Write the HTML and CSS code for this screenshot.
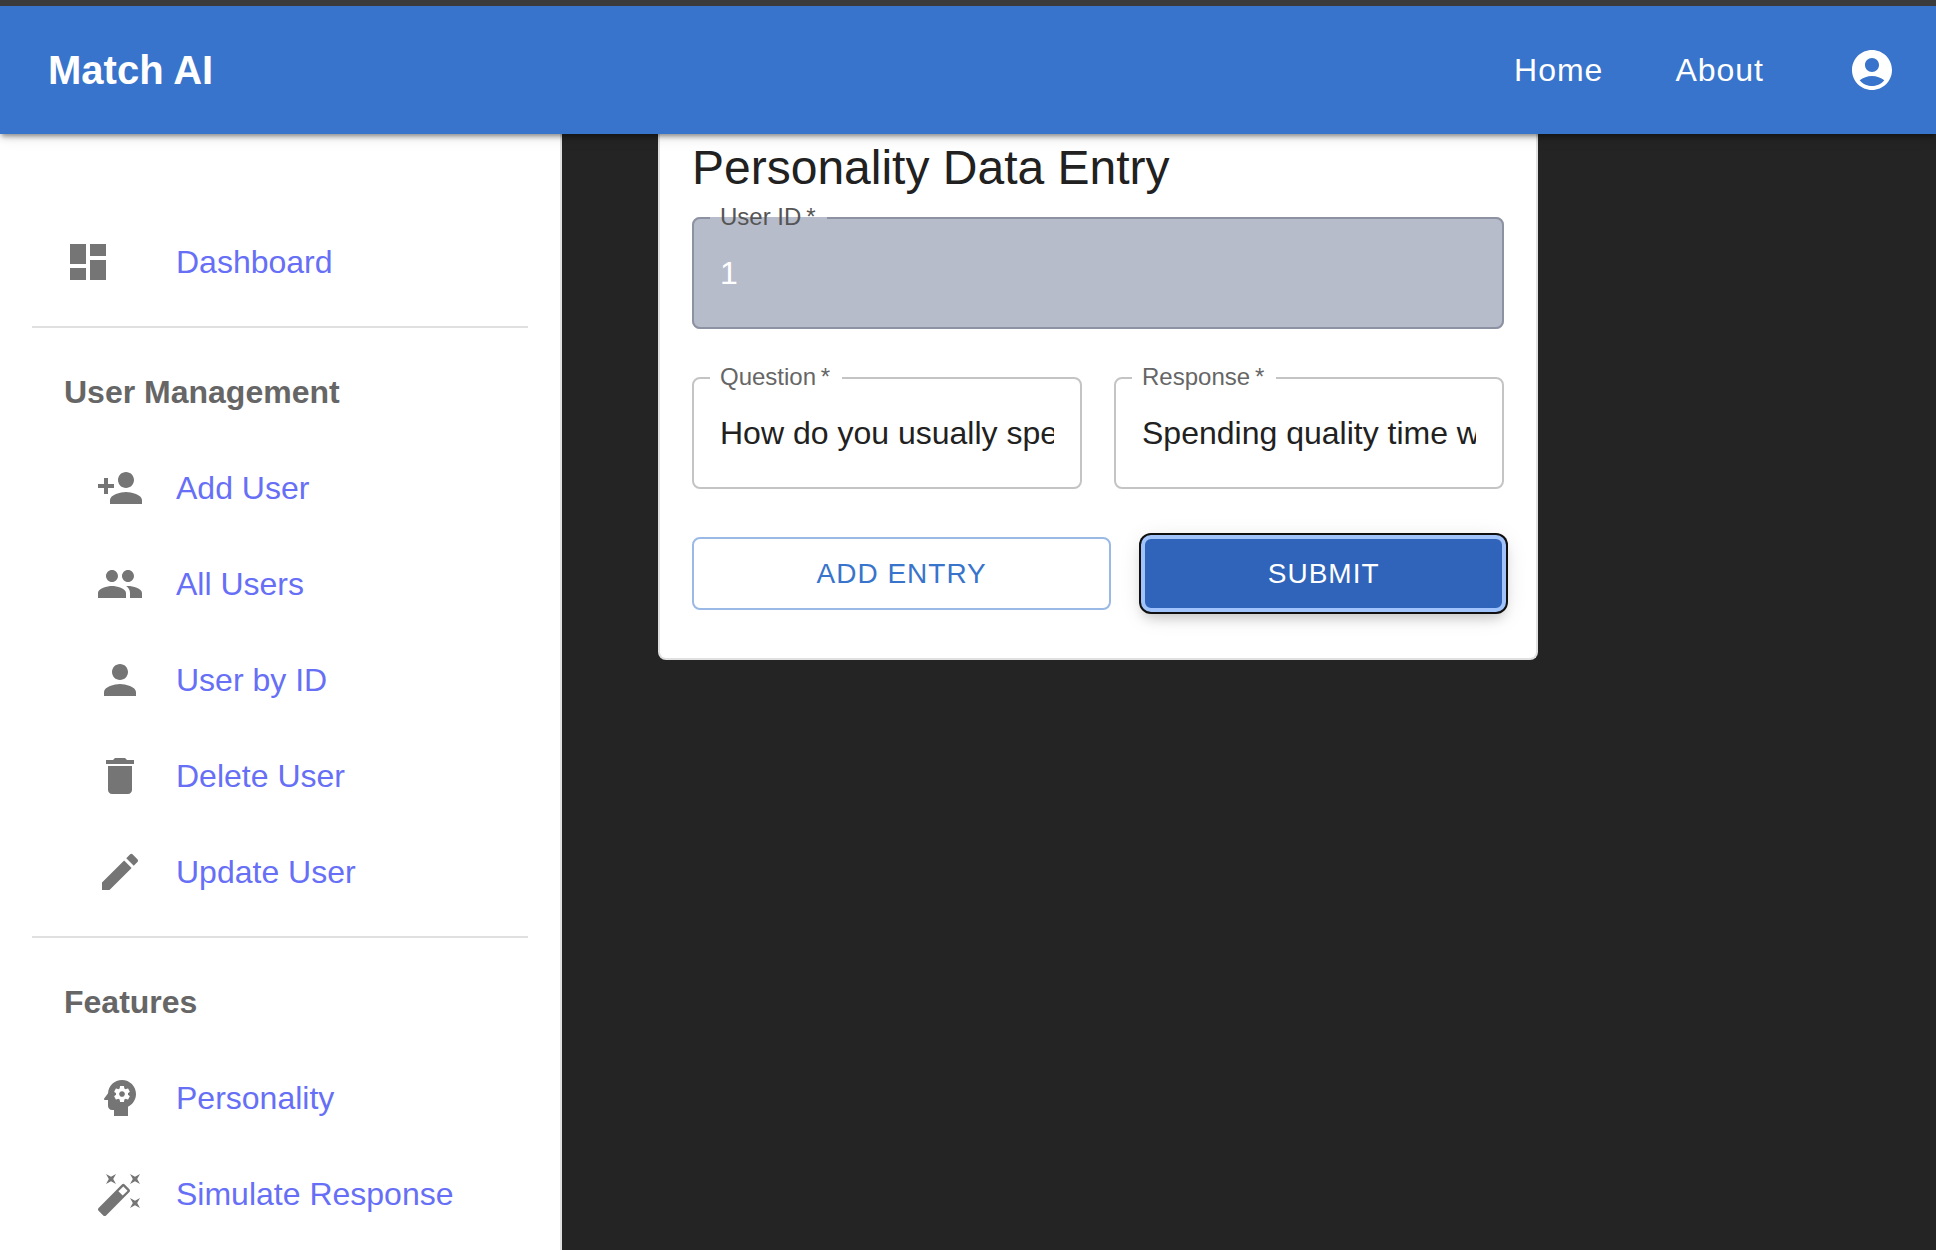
FILE: index.html
```html
<!DOCTYPE html>
<html lang="en">
<head>
<meta charset="utf-8">
<meta name="viewport" content="width=device-width, initial-scale=1">
<title>Match AI</title>
<link rel="stylesheet" href="styles.css">
</head>
<body>
<header class="appbar">
  <span class="brand">Match AI</span>
  <nav class="appnav" aria-label="Main">
    <a href="#home">Home</a>
    <a href="#about">About</a>
  </nav>
  <button class="account" type="button" aria-label="Account">
    <svg class="icon" viewBox="0 0 24 24" aria-hidden="true"><path d="M12 2C6.48 2 2 6.48 2 12s4.48 10 10 10 10-4.48 10-10S17.52 2 12 2m0 4c1.93 0 3.5 1.57 3.5 3.5S13.93 13 12 13s-3.5-1.57-3.5-3.5S10.07 6 12 6m0 14c-2.03 0-4.43-.82-6.14-2.88C7.55 15.8 9.68 15 12 15s4.45.8 6.14 2.12C16.43 19.18 14.03 20 12 20"/></svg>
  </button>
</header>
<div class="layout">
  <aside class="sidebar">
    <ul class="group group-top">
      <li><a class="item" href="#dashboard"><svg class="icon" viewBox="0 0 24 24" aria-hidden="true"><path d="M3 13h8V3H3zm0 8h8v-6H3zm10 0h8V11h-8zm0-18v6h8V3z"/></svg>Dashboard</a></li>
    </ul>
    <h2 class="subheader">User Management</h2>
    <ul class="group">
      <li><a class="item" href="#add"><svg class="icon" viewBox="0 0 24 24" aria-hidden="true"><path d="M15 12c2.210 0 4-1.790 4-4s-1.790-4-4-4-4 1.790-4 4 1.790 4 4 4m-9-2V7H4v3H1v2h3v3h2v-3h3v-2zm9 4c-2.670 0-8 1.340-8 4v2h16v-2c0-2.660-5.330-4-8-4"/></svg>Add User</a></li>
      <li><a class="item" href="#users"><svg class="icon" viewBox="0 0 24 24" aria-hidden="true"><path d="M16 11c1.660 0 2.990-1.340 2.990-3S17.660 5 16 5s-3 1.340-3 3 1.340 3 3 3m-8 0c1.660 0 2.990-1.340 2.990-3S9.660 5 8 5 5 6.340 5 8s1.340 3 3 3m0 2c-2.330 0-7 1.170-7 3.500V19h14v-2.500c0-2.330-4.670-3.500-7-3.500m8 0c-.290 0-.620.020-.970.050 1.160.840 1.970 1.970 1.970 3.450V19h6v-2.500c0-2.330-4.670-3.500-7-3.500"/></svg>All Users</a></li>
      <li><a class="item" href="#user"><svg class="icon" viewBox="0 0 24 24" aria-hidden="true"><path d="M12 12c2.210 0 4-1.790 4-4s-1.790-4-4-4-4 1.790-4 4 1.790 4 4 4m0 2c-2.670 0-8 1.340-8 4v2h16v-2c0-2.660-5.330-4-8-4"/></svg>User by ID</a></li>
      <li><a class="item" href="#delete"><svg class="icon" viewBox="0 0 24 24" aria-hidden="true"><path d="M6 19c0 1.100.900 2 2 2h8c1.100 0 2-.900 2-2V7H6zM19 4h-3.500l-1-1h-5l-1 1H5v2h14z"/></svg>Delete User</a></li>
      <li><a class="item" href="#update"><svg class="icon" viewBox="0 0 24 24" aria-hidden="true"><path d="M3 17.250V21h3.750L17.810 9.940l-3.750-3.750zM20.710 7.040c.390-.390.390-1.020 0-1.410l-2.340-2.340a.9959.9959 0 0 0-1.410 0l-1.830 1.830 3.750 3.750z"/></svg>Update User</a></li>
    </ul>
    <h2 class="subheader">Features</h2>
    <ul class="group group-last">
      <li><a class="item" href="#personality"><svg class="icon" viewBox="0 0 24 24" aria-hidden="true"><path d="M13 8.570c-.790 0-1.430.640-1.430 1.430s.640 1.430 1.430 1.430 1.430-.640 1.430-1.430-.640-1.430-1.430-1.430"/><path d="M13 3C9.250 3 6.200 5.940 6.020 9.640L4.100 12.200c-.250.330-.010.800.400.800H6v3c0 1.100.900 2 2 2h1v3h7v-4.680c2.360-1.120 4-3.530 4-6.320 0-3.870-3.130-7-7-7m3 7c0 .130-.010.260-.020.390l.830.660c.080.060.100.160.050.250l-.800 1.390c-.050.090-.160.120-.240.090l-.990-.400c-.210.160-.430.290-.670.390L14 13.830c-.010.100-.100.170-.200.170h-1.600c-.100 0-.180-.070-.200-.170l-.150-1.060c-.250-.100-.470-.230-.680-.390l-.990.400c-.090.030-.200 0-.250-.090l-.800-1.390c-.050-.080-.030-.190.050-.250l.840-.660c-.010-.130-.020-.260-.020-.390s.020-.270.040-.390l-.850-.660c-.080-.060-.100-.160-.050-.260l.800-1.380c.050-.090.150-.120.240-.090l1 .400c.200-.150.430-.290.670-.390L12 6.170c.020-.100.100-.170.200-.170h1.600c.100 0 .180.070.200.170l.150 1.060c.240.100.460.230.670.390l1-.400c.090-.030.200 0 .240.090l.800 1.380c.050.090.030.200-.050.260l-.850.660c.030.120.040.250.040.390"/></svg>Personality</a></li>
      <li><a class="item" href="#simulate"><svg class="icon" viewBox="0 0 24 24" aria-hidden="true"><path d="M7.500 5.600 10 7 8.600 4.500 10 2 7.500 3.400 5 2l1.400 2.500L5 7zm12 9.800L17 14l1.400 2.500L17 19l2.500-1.400L22 19l-1.400-2.500L22 14zM22 2l-2.500 1.400L17 2l1.400 2.500L17 7l2.500-1.400L22 7l-1.400-2.500zm-7.630 5.290a.9959.9959 0 0 0-1.410 0L1.290 18.960c-.390.390-.390 1.020 0 1.410l2.340 2.340c.390.390 1.020.390 1.410 0L16.700 11.050c.390-.390.390-1.020 0-1.410zm-1.030 5.490-2.120-2.120 2.440-2.440 2.120 2.120z"/></svg>Simulate Response</a></li>
    </ul>
  </aside>
  <main class="content">
    <form class="card">
      <h1 class="title">Personality Data Entry</h1>
      <div class="fields">
        <fieldset class="field field-wide field-disabled">
          <legend><label for="user-id">User ID&#8201;*</label></legend>
          <input id="user-id" type="text" value="1" disabled>
        </fieldset>
        <fieldset class="field">
          <legend><label for="question">Question&#8201;*</label></legend>
          <input id="question" type="text" value="How do you usually spend your weekends?" required>
        </fieldset>
        <fieldset class="field">
          <legend><label for="response">Response&#8201;*</label></legend>
          <input id="response" type="text" value="Spending quality time with friends and family" required>
        </fieldset>
      </div>
      <div class="actions">
        <button class="btn btn-outlined" type="button">Add Entry</button>
        <button class="btn btn-primary" type="submit">Submit</button>
      </div>
    </form>
  </main>
</div>
</body>
</html>
```
FILE: styles.css
```css
* {
  box-sizing: border-box;
}

html {
  height: 100%;
}

body {
  display: flex;
  flex-direction: column;
  min-height: 100%;
  margin: 0;
  border-top: 6px solid #3b3b3b;
  background: #242424;
  color: #212121;
  font-family: "Liberation Sans", Helvetica, Arial, sans-serif;
  font-size: 32px;
  line-height: 48px;
}

a {
  color: inherit;
  text-decoration: none;
}

button,
input {
  margin: 0;
  font: inherit;
}

.icon {
  flex: none;
  width: 48px;
  height: 48px;
  fill: currentColor;
}

/* App bar */
.appbar {
  position: relative;
  z-index: 1;
  display: flex;
  align-items: center;
  min-height: 128px;
  padding: 0 16px 0 48px;
  background: #3874cb;
  box-shadow:
    0 4px 4px -2px rgba(0, 0, 0, 0.3),
    0 2px 8px 0 rgba(0, 0, 0, 0.2),
    0 2px 16px 0 rgba(0, 0, 0, 0.1);
  color: #fff;
}

.brand {
  flex: 1;
  font-size: 40px;
  font-weight: 700;
}

.appnav {
  display: flex;
  gap: 72px;
  margin-right: 60px;
  letter-spacing: 1px;
}

.account {
  display: flex;
  padding: 24px;
  border: 0;
  background: none;
  color: inherit;
}

/* Sidebar */
.layout {
  display: flex;
  flex: 1;
}

.sidebar {
  flex: none;
  width: 562px;
  padding: 64px 32px 0;
  border-right: 2px solid #e0e0e0;
  background: #fff;
}

.group {
  margin: 0;
  padding: 0 0 16px;
  border-bottom: 2px solid #e0e0e0;
  list-style: none;
}

.group-top {
  padding-top: 16px;
}

.group-last {
  padding-bottom: 0;
  border-bottom: 0;
}

.subheader {
  margin: 0;
  padding: 16px 32px 0;
  color: #666;
  font-size: 32px;
  font-weight: 700;
  line-height: 96px;
}

.item {
  display: flex;
  align-items: center;
  gap: 32px;
  height: 96px;
  padding: 0 0 0 64px;
  color: #666ff6;
}

.group-top .item {
  gap: 64px;
  padding-left: 32px;
}

.item .icon {
  color: #757575;
}

/* Form card */
.content {
  flex: 1;
  padding: 0 96px;
}

.card {
  max-width: 880px;
  padding: 2px 32px 48px;
  border: 2px solid #e0e0e0;
  border-top: 0;
  border-radius: 0 0 8px 8px;
  background: #fff;
}

.title {
  margin: 0 0 6px;
  font-size: 48px;
  font-weight: 400;
  line-height: 64px;
}

.fields {
  display: grid;
  grid-template-columns: 1fr 1fr;
  gap: 37px 32px;
}

.field {
  min-width: 0;
  margin: 0;
  padding: 0 26px 11px;
  border: 2px solid #c4c4c4;
  border-radius: 8px;
}

.field-wide {
  grid-column: 1 / -1;
}

.field legend {
  margin-left: -10px;
  padding: 0 12px 2px 10px;
  color: #666;
  font-size: 24px;
  line-height: 22px;
}

.field label {
  display: block;
}

.field input {
  display: block;
  width: 100%;
  height: 86px;
  padding: 0;
  border: 0;
  outline: 0;
  background: none;
  color: #212121;
}

.field-disabled {
  border-color: #8d92a2;
  background: #b7bccb;
}

.field-disabled legend {
  color: #555;
}

.field-disabled input {
  color: #fff;
}

.actions {
  display: flex;
  gap: 32px;
  margin-top: 48px;
}

.btn {
  flex: 1 1 auto;
  padding: 10px 30px;
  border: 2px solid transparent;
  border-radius: 8px;
  font-size: 28px;
  line-height: 49px;
  letter-spacing: 1px;
  text-transform: uppercase;
}

.btn-outlined {
  border-color: #9bb9e5;
  background: #fff;
  color: #3874cb;
}

/* Shown with its keyboard focus ring */
.btn-primary {
  outline: 4px solid #a1c3fb;
  outline-offset: -2px;
  background: #2f64ba;
  box-shadow:
    0 0 0 4px #101010,
    0 8px 12px 0 rgba(0, 0, 0, 0.16),
    0 4px 24px 0 rgba(0, 0, 0, 0.14);
  color: #fff;
}
```
